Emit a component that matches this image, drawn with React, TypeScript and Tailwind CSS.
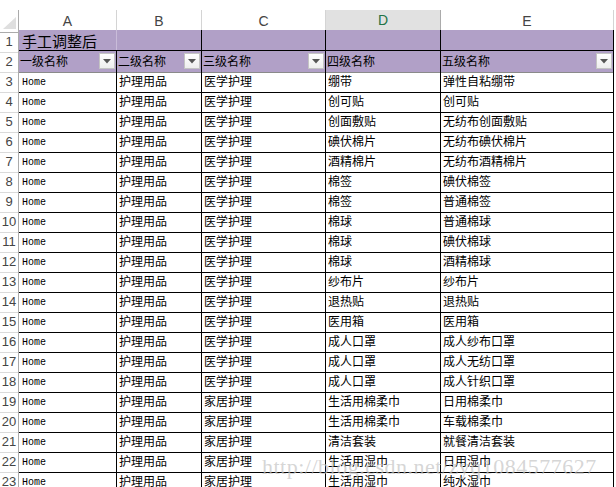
import React from 'react'

const rows: [string, string, string][] = [
  ['医学护理', '绷带', '弹性自粘绷带'],
  ['医学护理', '创可贴', '创可贴'],
  ['医学护理', '创面敷贴', '无纺布创面敷贴'],
  ['医学护理', '碘伏棉片', '无纺布碘伏棉片'],
  ['医学护理', '酒精棉片', '无纺布酒精棉片'],
  ['医学护理', '棉签', '碘伏棉签'],
  ['医学护理', '棉签', '普通棉签'],
  ['医学护理', '棉球', '普通棉球'],
  ['医学护理', '棉球', '碘伏棉球'],
  ['医学护理', '棉球', '酒精棉球'],
  ['医学护理', '纱布片', '纱布片'],
  ['医学护理', '退热贴', '退热贴'],
  ['医学护理', '医用箱', '医用箱'],
  ['医学护理', '成人口罩', '成人纱布口罩'],
  ['医学护理', '成人口罩', '成人无纺口罩'],
  ['医学护理', '成人口罩', '成人针织口罩'],
  ['家居护理', '生活用棉柔巾', '日用棉柔巾'],
  ['家居护理', '生活用棉柔巾', '车载棉柔巾'],
  ['家居护理', '清洁套装', '就餐清洁套装'],
  ['家居护理', '生活用湿巾', '日用湿巾'],
  ['家居护理', '生活用湿巾', '纯水湿巾'],
]

const grid = 'grid grid-cols-[19px_98px_85px_124px_115px_173px]'
const cjk = "font-['SimSun','Noto_Sans_CJK_SC',sans-serif]"

function Filter() {
  return (
    <span className="ml-auto mr-[1px] flex h-[16px] w-[16px] items-center justify-center border border-[#c4c4c4] bg-gradient-to-b from-white to-[#eeeeee]">
      <svg width="8" height="5" viewBox="0 0 8 5">
        <path d="M0 0 L8 0 L4 4.5 Z" fill="#555" />
      </svg>
    </span>
  )
}

function RowNum({ n }: { n: number }) {
  return (
    <div className="flex items-center justify-center border-r border-b border-r-[#ababab] border-b-[#dadada] pt-[2px] text-[13px] text-[#444] font-['Liberation_Sans',sans-serif]">
      {n}
    </div>
  )
}

export default function App() {
  const cols = ['A', 'B', 'C', 'D', 'E']
  return (
    <div className={`relative h-[487px] w-[616px] overflow-hidden bg-white ${cjk}`}>
      <div className="h-[10px]" />
      <div className={`${grid} h-[20px]`}>
        <div className="relative border-r border-b border-[#ababab]">
          <svg className="absolute right-[2px] bottom-[3px]" width="13" height="12" viewBox="0 0 13 12">
            <path d="M13 0 L13 12 L0 12 Z" fill="#dfdfdf" />
          </svg>
        </div>
        {cols.map((c) =>
          c === 'D' ? (
            <div key={c} className="flex items-center justify-center border-r border-[#ababab] border-b-2 border-b-[#217346] bg-[#e1e1e1] text-[14px] text-[#217346] font-['Liberation_Sans',sans-serif]">
              {c}
            </div>
          ) : (
            <div key={c} className="flex items-center justify-center border-r border-b border-[#d4d4d4] border-b-[#ababab] text-[14px] text-[#444] font-['Liberation_Sans',sans-serif]">
              {c}
            </div>
          )
        )}
      </div>

      <div className={`${grid} h-[20px]`}>
        <RowNum n={1} />
        <div className="flex items-center border-r border-[#c9bcd9] bg-[#b1a0c7] pl-[3px] text-[15px] text-black">手工调整后</div>
        <div className="border-r border-black bg-[#b1a0c7]" />
        <div className="border-r border-black bg-[#b1a0c7]" />
        <div className="border-r border-black bg-[#b1a0c7]" />
        <div className="border-r border-black bg-[#b1a0c7]" />
      </div>

      <div className={`${grid} h-[20px]`}>
        <RowNum n={2} />
        {['一级名称', '二级名称', '三级名称', '四级名称', '五级名称'].map((t, i) => (
          <div key={t} className="flex items-center border-t border-r border-b border-t-black border-r-black border-b-[#8a8a8a] bg-[#b1a0c7] pl-[1px] text-[12px] text-black">
            <span>{t}</span>
            {i !== 3 && <Filter />}
          </div>
        ))}
      </div>

      {rows.map((r, i) => (
        <div key={i} className={`${grid} h-[20px]`}>
          <RowNum n={i + 3} />
          <div className="flex items-center border-r border-b border-black pl-[3px] pt-[3px] text-[10px] text-black font-['Liberation_Mono',monospace]">
            Home
          </div>
          <div className="flex items-center border-r border-b border-black pl-[2px] text-[12px] text-black">护理用品</div>
          <div className="flex items-center border-r border-b border-black pl-[2px] text-[12px] text-black">{r[0]}</div>
          <div className="flex items-center border-r border-b border-black pl-[2px] text-[12px] text-black">{r[1]}</div>
          <div className="flex items-center border-r border-b border-black pl-[2px] text-[12px] text-black">{r[2]}</div>
        </div>
      ))}

      <div className="pointer-events-none absolute left-[262px] top-[450px] text-[22px] tracking-[0.5px] text-[#c4c4c4]/70 font-['Liberation_Serif',serif]">
        http://blog.csdn.net/zyq1084577627
      </div>
    </div>
  )
}
